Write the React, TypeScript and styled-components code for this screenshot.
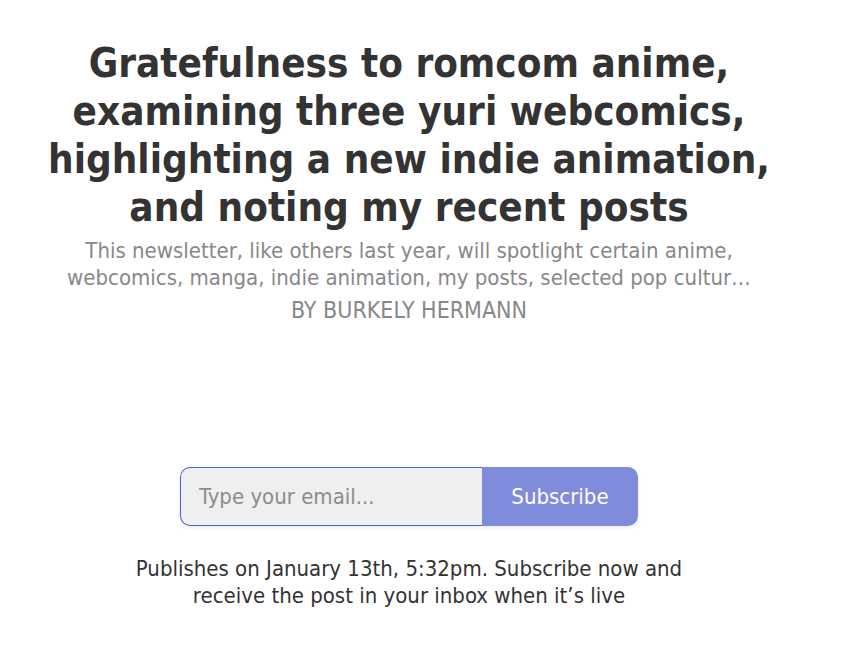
import React from "react";
import styled, { createGlobalStyle } from "styled-components";

const Global = createGlobalStyle`
  html, body { margin: 0; padding: 0; background: #ffffff; }
  body {
    font-family: "DejaVu Sans Condensed", "DejaVu Sans", "Liberation Sans", sans-serif;
    font-stretch: condensed;
    color: #333333;
  }
`;

const Page = styled.main`
  width: 818px;
  padding-top: 39px;
  display: flex;
  flex-direction: column;
  align-items: center;
  text-align: center;
`;

const Title = styled.h1`
  margin: 0;
  max-width: 740px;
  font-size: 40px;
  line-height: 48px;
  font-weight: 700;
  color: #333333;
`;

const Subtitle = styled.p`
  margin: 6px 0 0;
  max-width: 720px;
  font-size: 22px;
  line-height: 27px;
  color: #888888;
`;

const Byline = styled.div`
  margin-top: 6px;
  font-size: 23px;
  line-height: 27px;
  color: #888888;
  text-transform: uppercase;
`;

const Form = styled.form`
  margin-top: 143px;
  display: flex;
  height: 59px;
  width: 458px;
  border-radius: 10px;
  box-shadow: 0 2px 4px rgba(0, 0, 0, 0.08);
`;

const EmailInput = styled.input`
  box-sizing: border-box;
  width: 302px;
  height: 100%;
  margin: 0;
  padding: 0 18px;
  border: 1px solid #5060d8;
  border-right: none;
  border-radius: 10px 0 0 10px;
  background: #efefef;
  font-family: inherit;
  font-stretch: condensed;
  font-size: 22px;
  color: #333333;
  outline: none;
  &::placeholder { color: #8c8c8c; }
`;

const SubmitButton = styled.button`
  flex: 1;
  height: 100%;
  margin: 0;
  border: none;
  border-radius: 0 10px 10px 0;
  background: #7f8cdc;
  color: #ffffff;
  font-family: inherit;
  font-stretch: condensed;
  font-size: 22px;
  cursor: pointer;
`;

const Note = styled.p`
  margin: 29px 0 0;
  max-width: 580px;
  font-size: 22px;
  line-height: 27px;
  color: #333333;
`;

export default function App() {
  return (
    <>
      <Global />
      <Page>
        <Title>
          Gratefulness to romcom anime, examining three yuri webcomics,
          highlighting a new indie animation, and noting my recent posts
        </Title>
        <Subtitle>
          This newsletter, like others last year, will spotlight certain anime,
          webcomics, manga, indie animation, my posts, selected pop cultur…
        </Subtitle>
        <Byline>By Burkely Hermann</Byline>
        <Form onSubmit={(e) => e.preventDefault()}>
          <EmailInput type="email" placeholder="Type your email..." />
          <SubmitButton type="submit">Subscribe</SubmitButton>
        </Form>
        <Note>
          Publishes on January 13th, 5:32pm. Subscribe now and receive the post
          in your inbox when it’s live
        </Note>
      </Page>
    </>
  );
}
